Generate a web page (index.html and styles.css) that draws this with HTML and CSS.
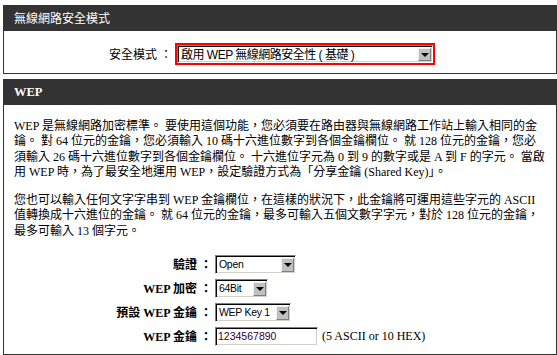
FILE: index.html
```html
<!DOCTYPE html>
<html>
<head>
<meta charset="utf-8">
<link rel="stylesheet" href="styles.css">
</head>
<body>
<div class="panel">
  <div class="panel-head">無線網路安全模式</div>
  <div class="panel-body body-mode">
    <div class="form form-mode">
      <div class="label">安全模式 ：</div>
      <div class="field">
        <div class="highlight">
          <div class="sel sel-mode"><span class="sel-text">啟用 WEP 無線網路安全性 ( 基礎 )</span><span class="sel-btn"></span></div>
        </div>
      </div>
    </div>
  </div>
</div>

<div class="panel">
  <div class="panel-head head-wep">WEP</div>
  <div class="panel-body body-wep">
    <p class="info">WEP 是無線網路加密標準。 要使用這個功能，您必須要在路由器與無線網路工作站上輸入相同的金<br>鑰。 對 64 位元的金鑰，您必須輸入 10 碼十六進位數字到各個金鑰欄位。 就 128 位元的金鑰，您必<br>須輸入 26 碼十六進位數字到各個金鑰欄位。 十六進位字元為 0 到 9 的數字或是 A 到 F 的字元。 當啟<br>用 WEP 時，為了最安全地運用 WEP，設定驗證方式為「分享金鑰 (Shared Key)」。</p>
    <p class="info info-2">您也可以輸入任何文字字串到 WEP 金鑰欄位，在這樣的狀況下，此金鑰將可運用這些字元的 ASCII<br>值轉換成十六進位的金鑰。 就 64 位元的金鑰，最多可輸入五個文數字字元，對於 128 位元的金鑰，<br>最多可輸入 13 個字元。</p>
    <div class="form form-wep">
      <div class="label">驗證 ：</div>
      <div class="field"><div class="sel sel-auth"><span class="sel-text">Open</span><span class="sel-btn"></span></div></div>

      <div class="label">WEP 加密 ：</div>
      <div class="field"><div class="sel sel-enc"><span class="sel-text">64Bit</span><span class="sel-btn"></span></div></div>

      <div class="label">預設 WEP 金鑰 ：</div>
      <div class="field"><div class="sel sel-key"><span class="sel-text">WEP Key 1</span><span class="sel-btn"></span></div></div>

      <div class="label">WEP 金鑰 ：</div>
      <div class="field"><div class="textbox">1234567890</div><span class="hint">(5 ASCII or 10 HEX)</span></div>
    </div>
  </div>
</div>
</body>
</html>
```

FILE: styles.css
```css
html, body {
  margin: 0;
  padding: 0;
  background: #ffffff;
}

body {
  padding-top: 5px;
  font-family: "Liberation Serif", "Noto Sans CJK TC", serif;
  font-size: 12px;
  color: #000000;
}

.panel {
  margin: 0 0 5px 3px;
}

.panel-head {
  height: 26px;
  line-height: 26px;
  background: #333333;
  color: #ffffff;
  padding-left: 11px;
  font-family: "Noto Sans CJK TC", sans-serif;
  font-size: 12px;
}

.head-wep {
  font-family: "Liberation Serif", serif;
  font-weight: bold;
  font-size: 12.5px;
}

.panel-body {
  border: 1px solid #333333;
  border-top: none;
}

.body-mode {
  padding: 12px 0 8px 0;
}

.body-wep {
  padding: 14px 0 6px 10px;
}

.info {
  margin: 0;
  line-height: 15.3px;
  white-space: nowrap;
}

.info-2 {
  margin-top: 13px;
}

.form {
  display: grid;
  column-gap: 3px;
  align-items: center;
}

.form-mode {
  grid-template-columns: 168px auto;
}

.form-wep {
  margin-top: 13px;
  grid-template-columns: 198px auto;
  grid-auto-rows: 24px;
}

.label {
  text-align: right;
  white-space: nowrap;
  font-family: "Liberation Serif", "Noto Sans CJK TC", serif;
  font-size: 12px;
}

.form-wep .label {
  font-weight: bold;
}

.field {
  display: flex;
  align-items: center;
}

.highlight {
  border: 2px solid #ff0000;
  display: flex;
}

.sel {
  display: flex;
  align-items: stretch;
  box-sizing: border-box;
  height: 19px;
  border: 1px solid;
  border-color: #808080 #ffffff #ffffff #808080;
  box-shadow: inset 1px 1px 0 #000000, inset -1px -1px 0 #d4d0c8;
  background: #ffffff;
  padding: 2px 1px 1px 2px;
  font-family: "Liberation Sans", "Noto Sans CJK TC", sans-serif;
  font-size: 10.5px;
  letter-spacing: -0.3px;
}

.sel-text {
  flex: 1;
  display: flex;
  align-items: center;
  padding-left: 1px;
  white-space: nowrap;
  line-height: 1;
}

.sel-btn {
  flex: none;
  width: 13px;
  box-sizing: border-box;
  background: #c0c0c0;
  border: 1px solid;
  border-color: #efefef #7f7f7f #7f7f7f #efefef;
  display: flex;
  align-items: center;
  justify-content: center;
}

.sel-btn::after {
  content: "";
  border-left: 4px solid transparent;
  border-right: 4px solid transparent;
  border-top: 4px solid #000000;
}

.sel-mode {
  width: 256px;
  height: 18px;
  font-size: 12px;
  letter-spacing: -0.5px;
}

.sel-auth {
  width: 81px;
}

.sel-enc {
  width: 53px;
}

.sel-key {
  width: 76px;
}

.textbox {
  box-sizing: border-box;
  width: 103px;
  height: 19px;
  border: 1px solid;
  border-color: #808080 #ffffff #ffffff #808080;
  box-shadow: inset 1px 1px 0 #000000, inset -1px -1px 0 #d4d0c8;
  padding: 0 2px;
  line-height: 17px;
  font-family: "Liberation Sans", sans-serif;
  font-size: 10.5px;
  color: #330033;
}

.hint {
  margin-left: 4px;
  font-family: "Liberation Serif", serif;
  font-size: 12px;
}
```
